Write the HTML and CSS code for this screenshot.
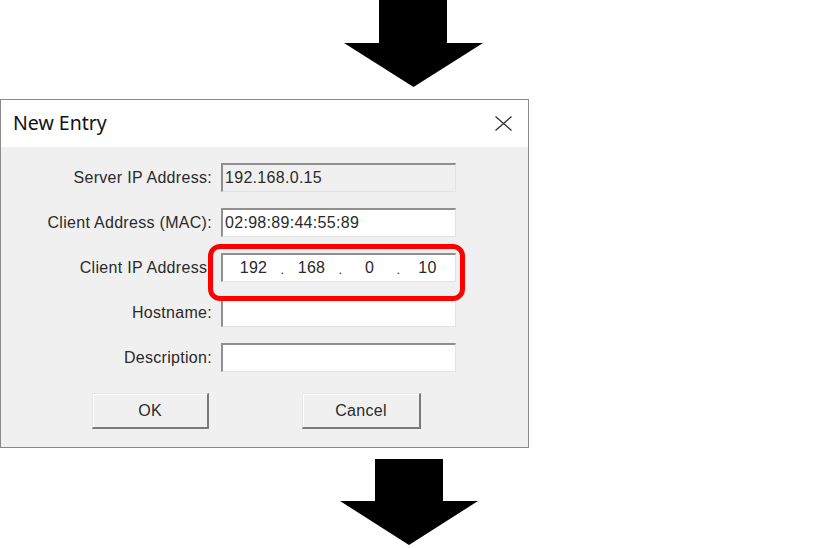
FILE: index.html
```html
<!DOCTYPE html>
<html lang="en">
  <head>
    <meta charset="UTF-8" />
    <meta name="viewport" content="width=device-width, initial-scale=1.0" />
    <title>New Entry</title>
    <link rel="stylesheet" href="styles.css">
  </head>
  <body>
    <svg class="arrow arrow-top" width="139" height="87" viewBox="0 0 139 87">
      <polygon points="35,0 103,0 103,43 139,43 69.5,87 0,43 35,43" />
    </svg>

    <div class="dialog">
      <div class="titlebar">
        <span class="title">New Entry</span>
        <svg class="close" width="17" height="15" viewBox="0 0 17 15">
          <line x1="0.5" y1="0.5" x2="16.5" y2="14.5" />
          <line x1="16.5" y1="0.5" x2="0.5" y2="14.5" />
        </svg>
      </div>

      <div class="dialog-body">
        <div class="form">
          <label>Server IP Address:</label>
          <div class="field readonly">192.168.0.15</div>

          <label>Client Address (MAC):</label>
          <div class="field">02:98:89:44:55:89</div>

          <label>Client IP Address:</label>
          <div class="ip-wrap">
            <div class="field ip-field">
              <span class="seg">192</span><span class="dot">.</span>
              <span class="seg">168</span><span class="dot">.</span>
              <span class="seg">0</span><span class="dot">.</span>
              <span class="seg">10</span>
            </div>
            <div class="highlight"></div>
          </div>

          <label>Hostname:</label>
          <div class="field"></div>

          <label>Description:</label>
          <div class="field"></div>
        </div>

        <div class="buttons">
          <button class="btn btn-ok">OK</button>
          <button class="btn btn-cancel">Cancel</button>
        </div>
      </div>
    </div>

    <svg class="arrow arrow-bottom" width="138" height="86" viewBox="0 0 138 86">
      <polygon points="35,0 103,0 103,42 138,42 69,86 0,42 35,42" />
    </svg>
  </body>
</html>
```

FILE: styles.css
```css
* {
  margin: 0;
  padding: 0;
  box-sizing: border-box;
}
body {
  background-color: #ffffff;
  font-family: "Liberation Sans", Arial, sans-serif;
  color: #2a2a2a;
  width: 819px;
  height: 548px;
  overflow: hidden;
}
.arrow {
  display: block;
  fill: #000;
}
.arrow-top {
  margin-left: 344px;
}
.arrow-bottom {
  margin-left: 340px;
  margin-top: 11px;
}
.dialog {
  width: 529px;
  height: 349px;
  margin-top: 12px;
  border: 1px solid #8a8a8a;
  background-color: #f0f0f0;
  display: flex;
  flex-direction: column;
}
.titlebar {
  height: 47px;
  background-color: #ffffff;
  display: flex;
  align-items: center;
  justify-content: space-between;
  padding: 0 16px 0 12px;
}
.title {
  font-family: "Noto Sans", "Open Sans", sans-serif;
  font-size: 19.5px;
  color: #111;
  margin-top: -2px;
}
.close line {
  stroke: #333;
  stroke-width: 1.3;
}
.dialog-body {
  flex: 1;
  padding-top: 16px;
}
.form {
  display: grid;
  grid-template-columns: 211px 235px;
  grid-auto-rows: 29px;
  column-gap: 9px;
  row-gap: 16px;
  font-size: 16px;
  letter-spacing: 0.3px;
}
.form label {
  justify-self: end;
  align-self: center;
}
.field {
  height: 29px;
  background-color: #ffffff;
  border-top: 2px solid #8f8f8f;
  border-left: 2px solid #8f8f8f;
  border-right: 1px solid #e3e3e3;
  border-bottom: 1px solid #e3e3e3;
  padding-left: 2px;
  display: flex;
  align-items: center;
}
.field.readonly {
  background-color: #f0f0f0;
}
.ip-wrap {
  position: relative;
}
.ip-field {
  padding-left: 6px;
}
.seg {
  width: 49px;
  text-align: center;
}
.dot {
  width: 9px;
  text-align: center;
  font-size: 13px;
  padding-top: 3px;
}
.highlight {
  position: absolute;
  left: -13px;
  top: -9px;
  width: 257px;
  height: 57px;
  border: 5px solid #ff0000;
  border-radius: 12px;
}
.buttons {
  display: flex;
  gap: 93px;
  padding-left: 91px;
  margin-top: 21px;
}
.btn {
  height: 36px;
  font-family: "Liberation Sans", Arial, sans-serif;
  font-size: 16px;
  letter-spacing: 0.3px;
  color: #2a2a2a;
  background-color: #f0f0f0;
  border-style: solid;
  border-width: 1px 2px 2px 1px;
  border-color: #e6e6e6 #7a7a7a #7a7a7a #e6e6e6;
  box-shadow: inset 1px 1px #ffffff;
}
.btn-ok {
  width: 117px;
}
.btn-cancel {
  width: 119px;
}
```
